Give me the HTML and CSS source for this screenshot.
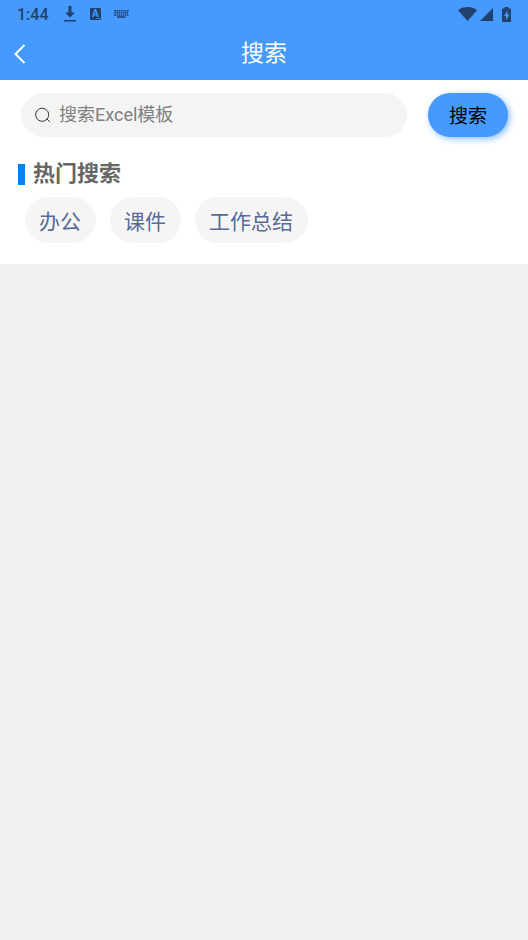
FILE: index.html
```html
<!DOCTYPE html>
<html lang="zh-CN">
<head>
<meta charset="utf-8">
<meta name="viewport" content="width=device-width, initial-scale=1">
<title>搜索</title>
<link rel="stylesheet" href="styles.css">
</head>
<body>
<header class="top">
  <div class="status">
    <span class="clock">1:44</span>
    <svg class="icon download" viewBox="0 0 12 16" aria-hidden="true"><path d="M4.500 0h3v6.500H11L6 11.500 1 6.500h3.500zM0 14h12v1.500H0z"/></svg>
    <svg class="icon letter" viewBox="0 0 12 12" aria-hidden="true"><rect width="11" height="12" rx="1"/><text class="letter-mark" x="2" y="9">A</text><path class="cut" d="M6 10h1v1H6zM8 10h2v1H8z"/></svg>
    <svg class="icon keyboard" viewBox="0 0 15 8" aria-hidden="true"><path d="M0 0h2v1.500H0zM2.600 0h1.500v1.500H2.600zM4.700 0h1.500v1.500H4.700zM6.800 0h1.500v1.500H6.800zM8.900 0h1.500v1.500H8.900zM11 0h1.500v1.500H11zM13 0h1.500v1.500H13zM.5 2.100h1.500v1.500H.5zM2.600 2.100h1.500v1.500H2.600zM4.700 2.100h1.500v1.500H4.700zM6.800 2.100h1.500v1.500H6.800zM8.900 2.100h1.500v1.500H8.900zM11 2.100h1.500v1.500H11zM13 2.100h1v1.500H13zM0 4.200h2v1.500H0zM2.600 4.200h1.500v1.500H2.600zM4.700 4.200h1.500v1.500H4.700zM6.800 4.200h1.500v1.500H6.800zM8.900 4.200h1.500v1.500H8.900zM11 4.200h1.500v1.500H11zM13 4.200h1.500v1.500H13zM3 6.300h8.500v1.500H3z"/></svg>
    <span class="signals">
      <svg class="icon wifi" viewBox="0 0 19 14" aria-hidden="true"><path d="M0 3.300Q4 0 9.500 0T19 3.300L9.500 14z"/></svg>
      <svg class="icon cell" viewBox="0 0 13 13" aria-hidden="true"><path d="M13 0v13H0z"/></svg>
      <svg class="icon battery" viewBox="0 0 9 15" aria-hidden="true"><path d="M2.500 0h4v1.500H8q1 0 1 1V14q0 1-1 1H1q-1 0-1-1V2.500q0-1 1-1h1.500z"/><path class="cut" d="M5.500 3.500L2 9h2v4.500l3.500-6H5.500z"/></svg>
    </span>
  </div>
  <nav class="bar">
    <button class="back" type="button" aria-label="返回"><svg class="chevron" viewBox="0 0 12 20" aria-hidden="true"><path d="M10.500 1L1.500 10l9 9"/></svg></button>
    <h1 class="title">搜索</h1>
  </nav>
</header>
<main class="panel">
  <form class="search">
    <label class="field">
      <svg class="lens" viewBox="0 0 16 16" aria-hidden="true"><path d="M10 13.600A6.500 6.500 0 1 1 12 12.100l2.800 2.700M10 13.600L12 12.100"/></svg>
      <input class="query" type="text" placeholder="搜索Excel模板" aria-label="搜索Excel模板">
    </label>
    <button class="submit" type="button">搜索</button>
  </form>
  <h2 class="heading">热门搜索</h2>
  <div class="tags">
    <button class="tag" type="button">办公</button>
    <button class="tag" type="button">课件</button>
    <button class="tag" type="button">工作总结</button>
  </div>
</main>
</body>
</html>
```

FILE: styles.css
```css
* { box-sizing: border-box; }
body {
  margin: 0;
  background: #f0f0f0;
  font-family: Roboto, "Noto Sans CJK SC", sans-serif;
}
button, input { font: inherit; border: 0; padding: 0; }
.top { background: #4699ff; }
.status {
  display: flex;
  align-items: center;
  height: 28px;
  padding: 0 17px;
  color: #1f416b;
}
.clock { font-size: 16px; font-weight: 500; line-height: 28px; width: 47px; padding-top: 2px; }
.icon { display: block; fill: #1f416b; }
.cut { fill: #4699ff; }
.download { width: 12px; height: 16px; }
.letter { width: 12px; height: 12px; margin-left: 14px; }
.letter-mark { fill: #4699ff; font-size: 10px; font-weight: 700; }
.keyboard { width: 15px; height: 8px; margin-left: 12px; }
.signals { display: flex; align-items: center; margin-left: auto; }
.cell { width: 13px; height: 13px; margin-left: 3px; }
.wifi { width: 19px; height: 14px; }
.battery { width: 9px; height: 15px; margin-left: 9px; }
.bar {
  display: grid;
  grid-template-columns: 48px 1fr 48px;
  align-items: center;
  height: 52px;
}
.back { display: flex; height: 52px; padding-left: 14px; align-items: center; background: none; }
.chevron { width: 12px; height: 20px; fill: none; stroke: #fff; stroke-width: 2; }
.title {
  margin: 0;
  font-size: 23px;
  font-weight: 400;
  line-height: 50px;
  text-align: center;
  color: #fff;
}
.panel { background: #fff; padding: 13px 20px 21px 18px; }
.search { display: flex; gap: 21px; padding-left: 3px; }
.field {
  display: flex;
  flex: 1;
  align-items: center;
  gap: 8px;
  height: 44px;
  padding: 0 14px;
  border-radius: 22px;
  background: #f4f4f4;
}
.lens { width: 16px; height: 16px; fill: none; stroke: #333; stroke-width: 1; }
.query { flex: 1; min-width: 0; height: 42px; padding-bottom: 2px; background: none; font-size: 18px; outline: 0; }
.query::placeholder { color: #808080; }
.submit {
  width: 80px;
  height: 44px;
  padding-bottom: 2px;
  border-radius: 22px;
  background: #4699ff;
  color: #000;
  font-size: 19px;
  box-shadow: 2px 2px 6px #4699ffa0;
}
.heading {
  display: flex;
  align-items: center;
  gap: 8px;
  margin: 22px 0 8px;
  font-size: 22px;
  font-weight: 700;
  line-height: 30px;
  color: #666;
}
.heading::before { content: ""; width: 7px; height: 21px; background: #0081ff; }
.tags { display: flex; flex-wrap: wrap; gap: 14px; padding-left: 7px; }
.tag {
  height: 46px;
  padding: 0 15px 0 14px;
  border-radius: 23px;
  background: #f5f5f5;
  color: #576b95;
  font-size: 21px;
}
```
